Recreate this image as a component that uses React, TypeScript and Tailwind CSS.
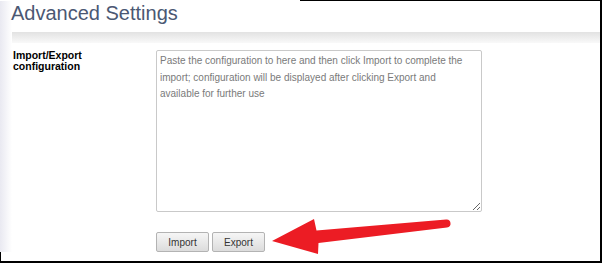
const PLACEHOLDER =
  "Paste the configuration to here and then click Import to complete the import; configuration will be displayed after clicking Export and available for further use";

function Arrow() {
  return (
    <svg
      className="absolute left-0 top-0 pointer-events-none"
      width={602}
      height={263}
      viewBox="0 0 602 263"
    >
      <path
        d="M272 241 L314 219 L316.5 230.5 L446 219.5 A4 4 0 0 1 447 227.5 L318.5 243 L318 254 Z"
        fill="#ec1c24"
      />
    </svg>
  );
}

export default function App() {
  return (
    <div
      className="relative flex flex-col w-[602px] h-[263px] bg-white border-r-2 border-black overflow-hidden"
      style={{ fontFamily: '"Liberation Sans", Arial, sans-serif' }}
    >
      {/* top edge */}
      <div className="h-px flex">
        <div className="w-[300px]" />
        <div className="flex-1 bg-black" />
      </div>

      <div className="flex h-[251px]">
        <div className="w-[12px] shrink-0 bg-gradient-to-r from-[#e9e9f1] to-white" />
        <div className="flex-1 flex flex-col">
          <div className="h-[31px] pt-[2px] -ml-px">
            <h1 className="text-[20px] leading-[20px] text-[#4b5873] font-normal">
              Advanced Settings
            </h1>
          </div>
          <div className="h-[11px] bg-gradient-to-b from-[#e2e2e2] to-[#f9f9f9]" />

          <div className="flex pt-[7px]">
            <div className="w-[144px] shrink-0 pl-px text-[10.5px] leading-[11px] font-bold text-black">
              Import/Export
              <br />
              configuration
            </div>
            <div className="flex flex-col">
              <textarea
                className="w-[326px] h-[162px] border border-[#c9c9c9] rounded-[2px] pl-[3px] pr-[8px] py-[2px] text-[10px] leading-[16.5px] text-[#333] placeholder:text-[#7a7a7a] outline-none"
                style={{ fontFamily: '"Liberation Sans", Arial, sans-serif' }}
                placeholder={PLACEHOLDER}
              />
              <div className="flex gap-[3px] mt-[20px]">
                <button className="w-[53px] h-[20px] rounded-[2px] border border-[#b3b3b3] bg-gradient-to-b from-[#f6f6f6] to-[#dcdcdc] text-[10px] text-[#333]">
                  Import
                </button>
                <button className="w-[53px] h-[20px] rounded-[2px] border border-[#b3b3b3] bg-gradient-to-b from-[#f6f6f6] to-[#dcdcdc] text-[10px] text-[#333]">
                  Export
                </button>
              </div>
            </div>
          </div>
        </div>
      </div>

      <div className="h-[9px] border-l border-black" />
      <div className="h-[2px] bg-black" />

      <Arrow />
    </div>
  );
}
